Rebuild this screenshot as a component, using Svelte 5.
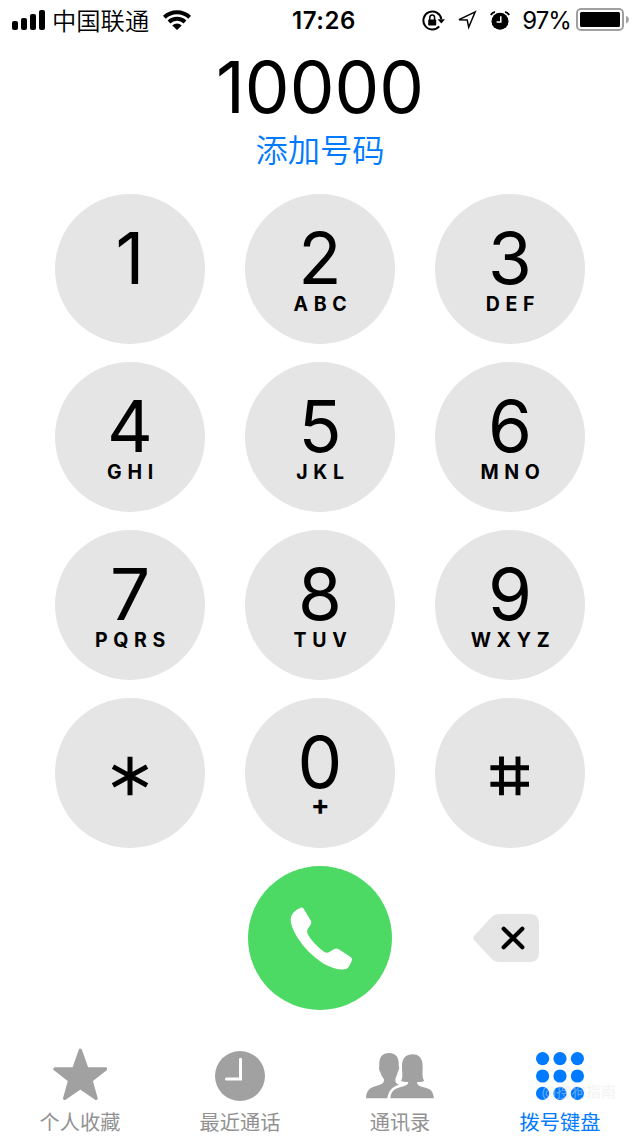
<script lang="ts">
  interface Key {
    digit: string
    letters?: string
  }

  const keys: Key[] = [
    { digit: '1' },
    { digit: '2', letters: 'ABC' },
    { digit: '3', letters: 'DEF' },
    { digit: '4', letters: 'GHI' },
    { digit: '5', letters: 'JKL' },
    { digit: '6', letters: 'MNO' },
    { digit: '7', letters: 'PQRS' },
    { digit: '8', letters: 'TUV' },
    { digit: '9', letters: 'WXYZ' },
    { digit: '*' },
    { digit: '0', letters: '+' },
    { digit: '#' },
  ]

  const tabs = [
    { id: 'favorites', label: '个人收藏' },
    { id: 'recents', label: '最近通话' },
    { id: 'contacts', label: '通讯录' },
    { id: 'keypad', label: '拨号键盘' },
  ]

  let number = $state('10000')
  let activeTab = $state('keypad')

  function press(digit: string): void {
    number += digit
  }

  function erase(): void {
    number = number.slice(0, -1)
  }
</script>

<div class="phone">
  <header class="status">
    <div class="status-left">
      <svg class="signal" viewBox="0 0 34 20" width="34" height="20" aria-hidden="true">
        <rect x="0" y="11" width="6" height="9" rx="2" />
        <rect x="9" y="8" width="6" height="12" rx="2" />
        <rect x="18" y="4" width="6" height="16" rx="2" />
        <rect x="27" y="0" width="6" height="20" rx="2" />
      </svg>
      <span class="carrier">中国联通</span>
      <svg class="wifi" viewBox="0 0 28 20" width="28" height="20" fill="none" stroke="currentColor" stroke-width="4" aria-hidden="true">
        <path d="M1.3 7.2 A18.5 18.5 0 0 1 26.7 7.2" />
        <path d="M6 12 A11.7 11.7 0 0 1 22 12" />
        <path d="M14 20 L9.3 15.4 A6.8 6.8 0 0 1 18.7 15.4 Z" fill="currentColor" stroke="none" />
      </svg>
    </div>
    <span class="time">17:26</span>
    <div class="status-right">
      <svg class="lock" viewBox="0 0 23 21" width="23" height="21" fill="none" stroke="currentColor" aria-hidden="true">
        <path d="M17.2 16.4 A9 9 0 1 1 19.3 9" stroke-width="2" />
        <path d="M15.6 9.2 h7.4 l-3.7 4.2 z" fill="currentColor" stroke="none" />
        <rect x="6.2" y="9.5" width="8" height="6" rx="0.8" fill="currentColor" stroke="none" />
        <path d="M7.8 10 V7.6 a2.4 2.6 0 0 1 4.8 0 V10" stroke-width="1.5" />
      </svg>
      <svg class="locate" viewBox="0 0 20 20" width="20" height="20" fill="none" stroke="currentColor" stroke-width="1.5" aria-hidden="true">
        <path d="M18.2 1.8 L2 9.7 L10.2 9.9 L11.7 17.2 Z" />
      </svg>
      <svg class="alarm" viewBox="0 0 20 19" width="20" height="19" fill="none" aria-hidden="true">
        <circle cx="10" cy="10.3" r="8.5" fill="currentColor" />
        <path d="M0.8 4 A7 7 0 0 1 5 0.9 M15 0.9 A7 7 0 0 1 19.2 4" stroke="currentColor" stroke-width="1.8" />
        <path d="M10.8 5.2 V11 H6.6" stroke="#fff" stroke-width="1.5" />
      </svg>
      <span class="percent">97%</span>
      <svg class="battery" viewBox="0 0 54 24" width="54" height="24" aria-hidden="true">
        <rect x="1" y="1" width="46" height="21" rx="4" fill="none" stroke="#a0a0a0" stroke-width="2" />
        <rect x="4" y="4" width="40" height="15" rx="1.5" />
        <path d="M50 7.8 Q53 9 53 11.5 T50 15.4 Z" fill="#a0a0a0" />
      </svg>
    </div>
  </header>

  <div class="number">{number}</div>
  <button type="button" class="add">添加号码</button>

  <div class="keypad">
    {#each keys as key (key.digit)}
      <button type="button" class="key" aria-label={key.digit} onclick={() => press(key.digit)}>
        {#if key.digit === '*'}
          <svg class="symbol" viewBox="0 0 40 40" width="40" height="40" stroke="currentColor" stroke-width="5" aria-hidden="true">
            <path d="M20 0.7 V39.3 M3 10.6 L37 29.4 M37 10.6 L3 29.4" />
          </svg>
        {:else if key.digit === '#'}
          <svg class="symbol" viewBox="0 0 40 40" width="40" height="40" stroke="currentColor" stroke-width="4.9" aria-hidden="true">
            <path d="M11.5 0.5 V39.3 M28 0.5 V39.3 M0.4 11.7 H39 M0.4 28.3 H39" />
          </svg>
        {:else}
          <span class="digit">{key.digit}</span>
          {#if key.letters}
            <span class="letters" class:plus={key.letters === '+'}>{key.letters}</span>
          {/if}
        {/if}
      </button>
    {/each}
  </div>

  <div class="actions">
    <button type="button" class="call" aria-label="Call">
      <svg viewBox="149 142 189 190" width="63" height="63.3" fill="#fff" aria-hidden="true">
        <path d="M158 160 Q165 150 181 144 Q187 143 190 147 L212 184 Q214 189 211 195 L202 208 Q198 215 202 223 Q218 252 252 277 Q260 282 267 277 L282 268 Q288 265 294 268 L330 291 Q337 296 335 301 Q328 322 318 328 Q290 334 250 312 Q200 280 172 235 Q150 200 151 178 Q152 168 158 160 Z" />
      </svg>
    </button>
    <button type="button" class="erase" aria-label="Delete" onclick={erase}>
      <svg viewBox="39 42 198 144" width="66" height="48" aria-hidden="true">
        <path d="M42 108 L95 51 Q104 42 118 42 H209 Q237 42 237 70 V158 Q237 186 209 186 H118 Q104 186 95 177 L42 120 Q37 114 42 108 Z" fill="#e5e5e5" />
        <path d="M131 86 L187 142 M187 86 L131 142" stroke="#000" stroke-width="12.5" stroke-linecap="round" />
      </svg>
    </button>
  </div>

  <nav class="tabs">
    {#each tabs as tab (tab.id)}
      <button type="button" class="tab" class:active={activeTab === tab.id} onclick={() => (activeTab = tab.id)}>
        <span class="tab-icon">
          {#if tab.id === 'favorites'}
            <svg class="star" viewBox="68 22 164 158" width="54.7" height="52.7" fill="currentColor" stroke="currentColor" stroke-width="10" stroke-linejoin="round" aria-hidden="true">
              <path d="M150 29 L170 85 L226 85 L182 119 L197 173 L150 141 L103 173 L118 119 L74 85 L130 85 Z" />
            </svg>
          {:else if tab.id === 'recents'}
            <svg viewBox="0 0 50 50" width="50" height="50" aria-hidden="true">
              <circle cx="25" cy="25" r="25" fill="currentColor" />
              <path d="M25.5 8.3 V28 H11.5" fill="none" stroke="#fff" stroke-width="3" stroke-linecap="round" />
            </svg>
          {:else if tab.id === 'contacts'}
            <svg viewBox="48 38 204 136" width="68" height="45.3" fill="currentColor" aria-hidden="true">
              <path d="M48 174 C49 152 57 143 78 137 C92 133 102 130 102 119 C101 111 93 108 91 95 C87 91 86 82 88 76 C86 49 98 38 117 38 C136 38 148 50 146 75 C149 83 147 91 143 95 C141 108 136 111 136 119 C136 127 140 130 147 133 C128 139 115 150 112 174 Z" />
              <path d="M121 174 C123 154 132 146 150 141 C166 137 174 134 175 125 C166 125 158 124 153 121 C160 112 156 100 156 77 C156 53 169 42 188 42 C207 42 218 54 218 78 C218 101 216 113 223 121 C217 125 209 125 201 125 C201 134 209 138 222 141 C242 146 249 152 252 174 Z" />
            </svg>
          {:else}
            <svg viewBox="0 0 48 48" width="48" height="48" fill="currentColor" aria-hidden="true">
              {#each [6.6, 24, 41.4] as cy}
                {#each [6.6, 24, 41.4] as cx}
                  <circle {cx} {cy} r="6.6" />
                {/each}
              {/each}
            </svg>
          {/if}
        </span>
        <span class="tab-label">{tab.label}</span>
      </button>
    {/each}
  </nav>

  <span class="watermark">@搜狗指南</span>
</div>

<style>
  :global(body) {
    margin: 0;
    background: #fff;
  }

  .phone {
    position: relative;
    display: flex;
    flex-direction: column;
    width: 640px;
    height: 1136px;
    overflow: hidden;
    background: #fff;
    color: #000;
    font-family: Inter, "Noto Sans CJK SC", sans-serif;
  }

  button {
    appearance: none;
    padding: 0;
    border: none;
    background: none;
    color: inherit;
    font: inherit;
    cursor: pointer;
  }

  svg {
    display: block;
    flex: none;
  }

  .status {
    display: grid;
    grid-template-columns: 1fr auto 1fr;
    align-items: center;
    height: 40px;
    flex: none;
  }
  .status-left {
    display: flex;
    align-items: center;
    padding-left: 12px;
  }
  .carrier {
    margin-left: 6px;
    font-family: "Noto Sans CJK SC", sans-serif;
    font-size: 24.3px;
    line-height: 40px;
    font-weight: 350;
  }
  .wifi { margin-left: 14px; }
  .time {
    padding: 2px 0 0 8px;
    font-size: 24px;
    font-weight: 600;
    letter-spacing: 0.6px;
    line-height: 38px;
  }
  .status-right {
    display: flex;
    align-items: center;
    justify-content: flex-end;
    padding-right: 10px;
  }
  .locate { margin-left: 12px; }
  .alarm { margin-left: 13px; }
  .percent {
    margin-left: 12px;
    padding-top: 2px;
    font-size: 24px;
    line-height: 38px;
    letter-spacing: -0.9px;
  }
  .battery { margin-left: 5px; }

  .number {
    height: 86px;
    font-size: 71px;
    line-height: 94px;
    text-align: center;
  }
  .add {
    align-self: center;
    height: 44px;
    color: #007aff;
    font-family: "Noto Sans CJK SC", sans-serif;
    font-size: 32.3px;
    font-weight: 350;
    line-height: 40px;
  }

  .keypad {
    display: grid;
    grid-template-columns: repeat(3, 150px);
    gap: 18px 40px;
    justify-content: center;
    padding-top: 24px;
  }
  .key {
    display: flex;
    flex-direction: column;
    align-items: center;
    height: 150px;
    border-radius: 50%;
    background: #e5e5e5;
  }
  .digit {
    height: 70px;
    padding-top: 28px;
    font-size: 71px;
    line-height: 72px;
  }
  .letters {
    padding-left: 6px;
    font-size: 19.5px;
    font-weight: 700;
    letter-spacing: 5.7px;
    line-height: 25px;
  }
  .plus {
    padding-left: 6px;
    font-size: 28px;
    line-height: 19px;
  }
  .symbol { margin-top: 58px; }

  .actions {
    display: grid;
    grid-template-columns: repeat(3, 150px);
    column-gap: 40px;
    justify-content: center;
    align-items: center;
    padding-top: 18px;
  }
  .call {
    display: flex;
    grid-column: 2;
    align-items: center;
    justify-content: center;
    justify-self: center;
    width: 144px;
    height: 144px;
    border-radius: 50%;
    background: #4cd964;
  }
  .call svg { margin: 2px 0 0 2px; }
  .erase {
    justify-self: center;
    margin-right: 8px;
  }

  .tabs {
    display: grid;
    grid-template-columns: repeat(4, 160px);
    margin-top: auto;
    height: 98px;
  }
  .tab {
    display: flex;
    flex-direction: column;
    align-items: center;
    color: #929292;
  }
  .tab-icon {
    display: flex;
    align-items: center;
    justify-content: center;
    height: 76px;
    color: #a1a1a1;
  }
  .star { margin-bottom: 4px; }
  .tab-label {
    margin-top: -2px;
    font-family: "Noto Sans CJK SC", sans-serif;
    font-size: 20.2px;
    line-height: 20px;
  }
  .active,
  .active .tab-icon { color: #007aff; }

  .watermark {
    position: absolute;
    right: 24px;
    bottom: 34px;
    color: rgba(255, 255, 255, 0.4);
    font-size: 15px;
    line-height: 20px;
    text-shadow: 0 0 1px rgba(0, 0, 0, 0.08);
    pointer-events: none;
  }
</style>
